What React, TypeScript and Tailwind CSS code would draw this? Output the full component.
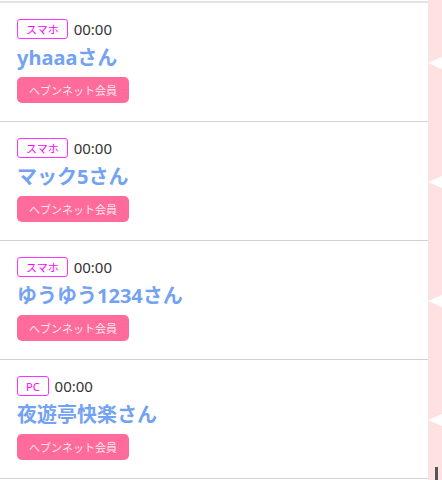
const members = [
  { device: "スマホ", time: "00:00", name: "yhaaaさん" },
  { device: "スマホ", time: "00:00", name: "マック5さん" },
  { device: "スマホ", time: "00:00", name: "ゆうゆう1234さん" },
  { device: "PC", time: "00:00", name: "夜遊亭快楽さん" },
];

function MemberRow({ device, time, name }: { device: string; time: string; name: string }) {
  return (
    <div className="h-[119px] border-b border-[#d2d2d2] flex flex-col items-start pt-4 pl-[17px]">
      <div className="flex items-center h-5 gap-[6px]">
        <span className="h-5 px-2 flex items-center border border-[#ff33ff] rounded-[3px] text-[11px] leading-none text-[#ff00ff]">
          {device}
        </span>
        <span className="text-[15px] leading-none text-[#333333]">{time}</span>
      </div>
      <div className="mt-1 h-[30px] flex items-center text-[20px] font-bold text-[#74a2f2] leading-none">
        {name}
      </div>
      <button className="mt-1 h-[26px] w-[112px] rounded-[5px] bg-[#ff6b9b] text-[11px] text-[#ffe6ee] leading-none">
        ヘブンネット会員
      </button>
    </div>
  );
}

export default function App() {
  return (
    <div
      className="flex w-[442px] h-[480px] overflow-hidden bg-white"
      style={{ fontFamily: '"Noto Sans", "Noto Sans CJK JP", sans-serif' }}
    >
      <div className="w-[428px] pt-px">
        <div className="border-t-2 border-[#e2e2e2]">
          {members.map((m, i) => (
            <MemberRow key={i} {...m} />
          ))}
        </div>
      </div>

      {/* side strip with tails */}
      <div className="relative w-[14px] bg-[#ffe1e1] flex flex-col pt-[3px]">
        {members.map((_, i) => (
          <div key={i} className="h-[119px] flex items-center justify-end">
            <div className="w-0 h-0 border-y-[6px] border-y-transparent border-r-[14px] border-r-white" />
          </div>
        ))}
        <div className="absolute bottom-0 right-[4px] w-[3px] h-[13px] bg-[#555555]" />
      </div>
    </div>
  );
}
